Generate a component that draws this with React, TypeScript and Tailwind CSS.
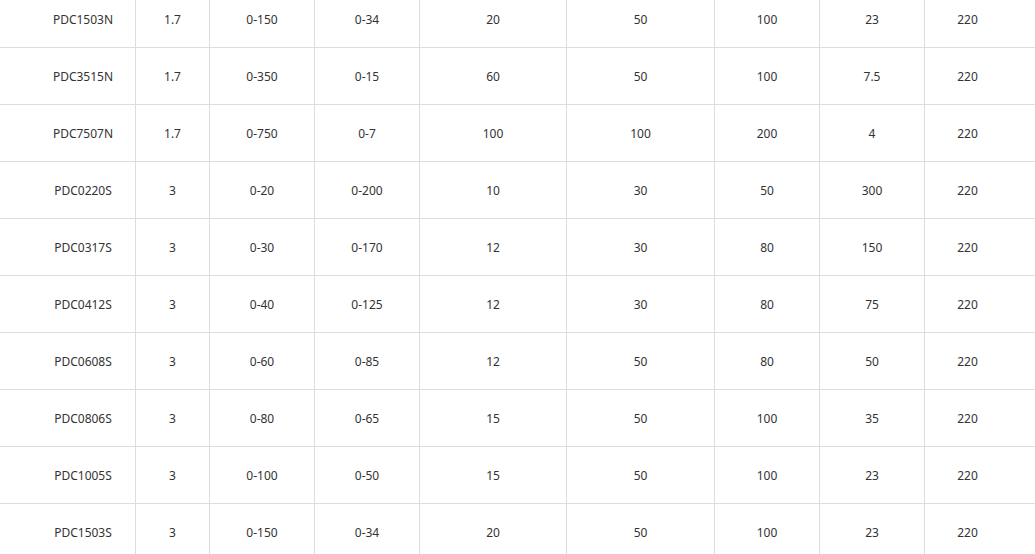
import React from 'react';

const ROWS: string[][] = [
  ['PDC1503N', '1.7', '0-150', '0-34', '20', '50', '100', '23', '220'],
  ['PDC3515N', '1.7', '0-350', '0-15', '60', '50', '100', '7.5', '220'],
  ['PDC7507N', '1.7', '0-750', '0-7', '100', '100', '200', '4', '220'],
  ['PDC0220S', '3', '0-20', '0-200', '10', '30', '50', '300', '220'],
  ['PDC0317S', '3', '0-30', '0-170', '12', '30', '80', '150', '220'],
  ['PDC0412S', '3', '0-40', '0-125', '12', '30', '80', '75', '220'],
  ['PDC0608S', '3', '0-60', '0-85', '12', '50', '80', '50', '220'],
  ['PDC0806S', '3', '0-80', '0-65', '15', '50', '100', '35', '220'],
  ['PDC1005S', '3', '0-100', '0-50', '15', '50', '100', '23', '220'],
  ['PDC1503S', '3', '0-150', '0-34', '20', '50', '100', '23', '220'],
];

const COL_W = [136, 74, 105, 105, 147, 148, 105, 105, 110];

const App: React.FC = () => {
  return (
    <div className="h-[554px] w-[1035px] overflow-hidden bg-white">
      <table
        className="-mt-[9px] table-fixed border-separate border-spacing-0 text-[12px] text-[#333] [font-family:'Noto_Sans','Liberation_Sans',sans-serif]"
        style={{ width: 1035 }}
      >
        <colgroup>
          {COL_W.map((w, i) => (
            <col key={i} style={{ width: w }} />
          ))}
        </colgroup>
        <tbody>
          {ROWS.map((row) => (
            <tr key={row[0]} className="h-[57px]">
              {row.map((cell, i) => (
                <td
                  key={i}
                  className={`border-b border-[#ddd] pt-[2px] pb-0 text-center align-middle ${
                    i === 0 ? 'pl-[31px] pr-0 border-r' : i === 8 ? 'pl-0 pr-[25px]' : 'px-0 border-r'
                  }`}
                >
                  {cell}
                </td>
              ))}
            </tr>
          ))}
        </tbody>
      </table>
    </div>
  );
};

export default App;
